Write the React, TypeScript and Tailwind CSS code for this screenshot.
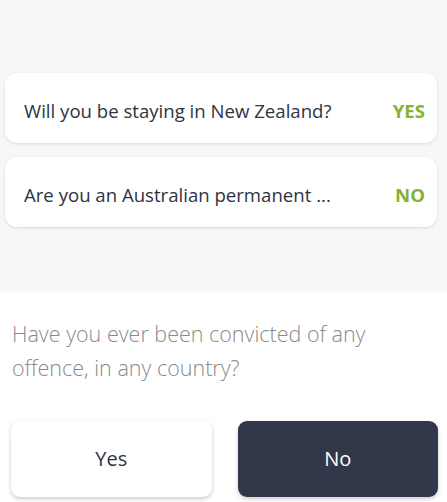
import React from 'react';

const answered = [
  { q: 'Will you be staying in New Zealand?', a: 'YES' },
  { q: 'Are you an Australian permanent ...', a: 'NO' },
];

export default function App() {
  return (
    <div
      className="flex h-[502px] w-[447px] flex-col overflow-hidden bg-white"
      style={{ fontFamily: '"Open Sans", "Noto Sans", sans-serif' }}
    >
      <div className="flex h-[290px] flex-col gap-[14px] bg-[#f7f7f7] pl-[5px] pr-[10px] pt-[73px] shadow-[0_1px_3px_rgba(0,0,0,0.04)]">
        {answered.map((item) => (
          <div
            key={item.q}
            className="flex h-[70px] items-center justify-between rounded-[12px] bg-white pl-[19px] pr-[12px] pt-[6px] shadow-[0_1px_3px_rgba(0,0,0,0.12)]"
          >
            <span className="text-[18.6px] text-[#2f3342]">{item.q}</span>
            <span className="text-[18.6px] font-bold text-[#84b233]">{item.a}</span>
          </div>
        ))}
      </div>

      <div className="px-[12px] pt-[27px]">
        <p className="text-[21.5px] font-light leading-[34px] text-[#8a8a8a]">
          Have you ever been convicted of any offence, in any country?
        </p>
      </div>

      <div className="mt-auto flex gap-[26px] pb-[5px] pl-[11px] pr-[9px]">
        <button className="flex h-[76px] flex-1 items-center justify-center rounded-[9px] bg-white text-[20px] font-medium text-[#2f3342] shadow-[0_2px_4px_rgba(0,0,0,0.2)]">
          Yes
        </button>
        <button className="flex h-[76px] flex-1 items-center justify-center rounded-[9px] bg-[#323849] text-[20px] font-medium text-white shadow-[0_2px_4px_rgba(0,0,0,0.2)]">
          No
        </button>
      </div>
    </div>
  );
}
